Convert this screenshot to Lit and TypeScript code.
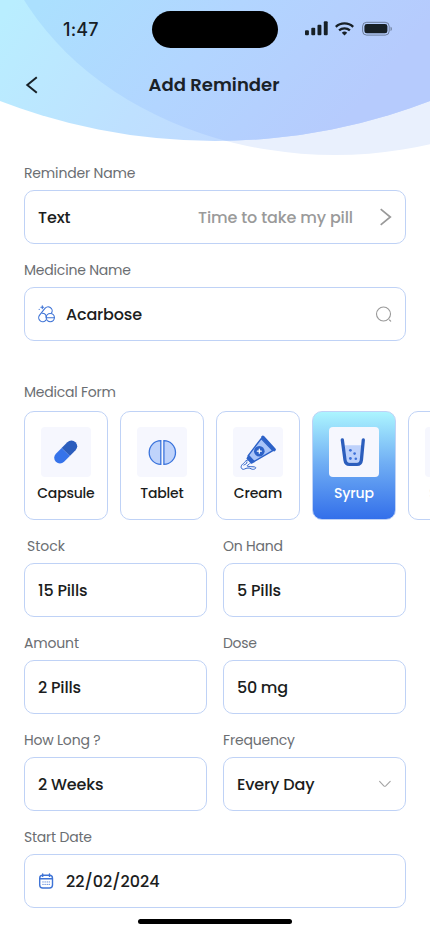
import { LitElement, html, css, svg, nothing, type TemplateResult } from "lit";
import { customElement, property } from "lit/decorators.js";
import { classMap } from "lit/directives/class-map.js";

const FONT = css`"Poppins", "Inter", "Open Sans", sans-serif`;

/** A single line of text whose tracking is tuned so it spans a set measure. */
@customElement("tracked-text")
class TrackedText extends LitElement {
  @property() text = "";
  @property({ type: Number }) measure = 0;

  static styles = css`
    :host { display: inline-block; white-space: nowrap; }
  `;

  render() {
    return html`<span>${this.text}</span>`;
  }

  updated() {
    this.fit();
    document.fonts.ready.then(() => this.fit());
  }

  private fit() {
    const span = this.renderRoot.querySelector("span");
    if (!span || !this.measure || this.text.length < 2) return;
    span.style.letterSpacing = "0px";
    const gap = (this.measure - span.getBoundingClientRect().width) / (this.text.length - 1);
    span.style.letterSpacing = `${gap.toFixed(3)}px`;
    this.style.marginRight = `${(-gap).toFixed(3)}px`;
  }
}

const t = (text: string, measure: number) =>
  html`<tracked-text .text=${text} .measure=${measure}></tracked-text>`;

const pillsIcon = html`<svg width="18" height="18" viewBox="0 0 18 18" fill="none" stroke="#3f74d6" stroke-width="1.1" stroke-linecap="round">
  <path d="M7.9 15.2A3.9 3.9 0 1 1 1.6 10.2L6.7 3.7A3.9 3.9 0 0 1 13.5 8"/>
  <path d="M4.2 8.2C7 8.3 8.3 9.8 8.1 12"/>
  <circle cx="12.3" cy="12.6" r="4.1"/><path d="M8.3 12.7h8"/>
  <path d="M4.3.8v2.8M2.9 2.2h2.8M1.2 4.4v.1"/></svg>`;
const searchIcon = html`<svg width="18" height="18" viewBox="0 0 18 18" fill="none" stroke="#999" stroke-width="1.1" stroke-linecap="round">
  <circle cx="8.5" cy="9" r="7"/><path d="m14.5 15 1.2 1.2"/></svg>`;
const chevronRight = html`<svg width="14" height="18" viewBox="0 0 14 18" fill="none" stroke="#999" stroke-width="1.7"><path d="m1.7 1.2 9.6 7.8-9.6 7.8"/></svg>`;
const chevronDown = html`<svg width="14" height="8" viewBox="0 0 14 8" fill="none" stroke="#a3a3a3" stroke-width="1.1" stroke-linecap="round" stroke-linejoin="round"><path d="m.6 1.3 4.2 4.5q1 .9 2 0l4.4-4.5"/></svg>`;
const calendarIcon = html`<svg width="16" height="16" viewBox="0 0 16 16" fill="none" stroke="#3f74d6" stroke-width="1.4" stroke-linecap="round">
  <rect x="1.7" y="2.2" width="12.8" height="12.8" rx="3"/><path d="M4.7.9v2.5M11.5.9v2.5M1.9 5.8h12.4"/>
  <path stroke-width="1.1" d="M5 8.9v.1M7.1 8.9v.1M9.2 8.9v.1M11.2 8.9v.1M5 11.4v.1M7.1 11.4v.1M9.2 11.4v.1M11.2 11.4v.1"/></svg>`;

const capsuleIcon = svg`<g transform="rotate(-45 24.7 25)">
  <path fill="#2b5dbd" d="M24.7 19.2h8.1a5.8 5.8 0 0 1 0 11.6h-8.1z"/>
  <path fill="#3673ea" d="M24.7 19.2h-8.1a5.8 5.8 0 0 0 0 11.6h8.1z"/></g>`;
const tabletIcon = svg`<g fill="#bfd3fb" stroke="#3b74dc" stroke-width="1.3">
  <path d="M23.8 13.6v23.8A11.6 11.9 0 0 1 23.8 13.6z"/><path d="M26.9 13.6v23.8A11.6 11.9 0 0 0 26.9 13.6z"/></g>`;
const creamIcon = svg`<g stroke="#2d62c8" stroke-linejoin="round" stroke-linecap="round">
  <path d="M28.2 11.6 39.8 23.6 20.8 34.6 15.2 28.6z" fill="#a9c4f8" stroke-width="1.4"/>
  <path d="M29.8 10.2 41.2 22.6" stroke-width="3.4"/>
  <path d="m15.6 28.8 5.4 5.8-2.6 1.4-4.2-4.4z" fill="#2d62c8" stroke-width="1.5"/>
  <circle cx="26.3" cy="24.2" r="5.3" fill="#2d62c8" stroke="none"/>
  <path d="M26.3 22.2v4M24.3 24.2h4" stroke="#fff" stroke-width="1.2"/>
  <path d="M14.4 33.2c-3 .8-2.4 2.3-4 3.4-2.6 1.5-2.8 4.3-1.4 5.3 1.9 1.4 3-.8 6-.9 2.7-.1 3.6 1.8 5.6 1.3 2.8-.6 2.8-2.1.8-2.4-4-.5-5 .1-7-.7-1.3-.7 1.2-1 2.4-2.6M10.8 38c1.5-1 3-.5 3.2-3" fill="#f6f7fe" stroke-width="1"/></g>`;
const syrupIcon = svg`<path d="M15.4 18.2h18l-2.2 17.3H17.8z" fill="#bdd1fb"/>
  <path d="M13.3 12.8 16 33q.5 4.3 4.4 4.3h7.6q3.9 0 4.4-4.3l1.9-20.2" fill="none" stroke="#2c5ebd" stroke-width="3.3" stroke-linecap="round"/>
  <g fill="#3d70d8"><circle cx="21.4" cy="23.3" r="1.4"/><circle cx="25.6" cy="26.6" r="1.3"/><circle cx="21.4" cy="31.5" r="1.4"/><circle cx="26.8" cy="31.8" r="1.3"/></g>`;

interface Form { name: string; measure: number; icon: unknown; selected?: boolean; faded?: boolean }
const FORMS: Form[] = [
  { name: "Capsule", measure: 57.5, icon: capsuleIcon },
  { name: "Tablet", measure: 43.5, icon: tabletIcon },
  { name: "Cream", measure: 48.5, icon: creamIcon },
  { name: "Syrup", measure: 40, icon: syrupIcon, selected: true },
  { name: "Spray", measure: 42, icon: nothing, faded: true },
];

@customElement("app-root")
class AppRoot extends LitElement {
  static styles = css`
    :host { display: block; width: 430px; height: 932px; overflow: hidden; background: #fff; color: #1b1d20; font-family: ${FONT}; position: relative; }
    * { box-sizing: border-box; }
    svg { display: block; flex: none; }
    .page { display: flex; flex-direction: column; height: 932px; }
    .header { position: relative; height: 163px; flex: none; }
    .backdrop { position: absolute; inset: 0; }
    .bar { position: relative; display: grid; grid-template-columns: 152px 126px 152px; align-items: start; padding-top: 11px; height: 60px; }
    .clock { font: 500 18px/20px Inter, sans-serif; padding: 9px 0 0 63px; color: #172026; }
    .island { height: 37px; border-radius: 19px; background: #000; }
    .status { padding: 9px 0 0 27px; }
    .nav { position: relative; display: grid; grid-template-columns: 60px 1fr 60px; align-items: center; height: 50px; }
    .back { padding-left: 25px; }
    .title { font-size: 18px; font-weight: 600; text-align: center; line-height: 24px; color: #1a2228; padding-right: 2px; }
    .form { display: flex; flex-direction: column; gap: 16px; padding: 0 24px; }
    .row { display: grid; grid-template-columns: 1fr 1fr; gap: 16px; }
    .field { display: flex; flex-direction: column; gap: 7px; }
    .label { font-size: 14px; line-height: 20px; color: #6b6e72; height: 20px; }
    .indent { padding-left: 3px; }
    .box { height: 54px; border: 1px solid #bfd2f6; border-radius: 10px; display: flex; align-items: center; padding: 1px 13px 0; font-size: 16px; font-weight: 500; }
    .lead { width: 28px; margin-top: -2px; }
    .value { flex: 1; }
    .hint { color: #9a9a9a; font-weight: 500; margin-right: 26px; }
    .trail { margin: -2px -1px 0 0; }
    .medical { display: flex; flex-direction: column; gap: 9px; margin-top: 25px; }
    .cards { display: flex; gap: 12px; margin-right: -24px; overflow: hidden; }
    .card { flex: none; width: 84px; height: 109px; border: 1px solid #bfd2f6; border-radius: 10px; display: flex; flex-direction: column; align-items: center; padding-top: 15px; font-size: 14px; font-weight: 500; line-height: 20px; gap: 6px; }
    .tile { width: 50px; height: 50px; border-radius: 4px; background: #f6f7fe; }
    .selected { background: linear-gradient(#adf6ff, #70aef4 48%, #326eea) border-box; color: #fff; }
    .faded { color: #e4e5e7; }
    .home { position: absolute; left: 138px; bottom: 8px; width: 154px; height: 5px; border-radius: 3px; background: #000; }
  `;

  private field(label: string, lm: number, value: string, vm: number, opts: { lead?: TemplateResult; trail?: TemplateResult; indent?: boolean; hint?: TemplateResult } = {}) {
    return html`<div class="field">
      <div class=${classMap({ label: true, indent: !!opts.indent })}>${t(label, lm)}</div>
      <div class="box">
        ${opts.lead ? html`<span class="lead">${opts.lead}</span>` : nothing}
        <span class="value">${t(value, vm)}</span>
        ${opts.hint ? html`<span class="hint">${opts.hint}</span>` : nothing}
        ${opts.trail ? html`<span class="trail">${opts.trail}</span>` : nothing}
      </div>
    </div>`;
  }

  render() {
    return html`<div class="page">
      <header class="header">
        <svg class="backdrop" width="430" height="163" viewBox="0 0 430 163">
          <defs>
            <linearGradient id="sky" gradientUnits="userSpaceOnUse" x1="0" y1="20" x2="270" y2="200">
              <stop offset="0" stop-color="#b9eeff"/><stop offset=".5" stop-color="#bee0ff"/><stop offset="1" stop-color="#c4d6ff"/>
            </linearGradient>
            <linearGradient id="lens" gradientUnits="userSpaceOnUse" x1="50" y1="-10" x2="290" y2="190">
              <stop offset="0" stop-color="#abe0fe"/><stop offset=".5" stop-color="#b2d5ff"/><stop offset="1" stop-color="#b6cbfd"/>
            </linearGradient>
            <clipPath id="dome"><circle cx="215" cy="-457" r="598"/></clipPath>
          </defs>
          <ellipse cx="335" cy="-125" rx="347.5" ry="280" fill="#e9f0fd"/>
          <circle cx="215" cy="-457" r="598" fill="url(#sky)"/>
          <ellipse cx="335" cy="-125" rx="347.5" ry="280" fill="url(#lens)" clip-path="url(#dome)"/>
        </svg>
        <div class="bar">
          <div class="clock">${t("1:47", 35.5)}</div>
          <div class="island"></div>
          <div class="status">
            <svg width="90" height="18" viewBox="0 0 90 18" fill="#172026">
              <rect x="0" y="10.3" width="3.9" height="5" rx="1"/><rect x="6.3" y="7.7" width="3.9" height="7.6" rx="1"/><rect x="12.5" y="4.7" width="3.9" height="10.6" rx="1"/><rect x="18.8" y="1.2" width="3.9" height="14.1" rx="1"/>
              <g fill="none" stroke="#172026" stroke-width="2.3"><path d="M30.8 6.8a12.7 12.7 0 0 1 17.4 0"/><path d="M34.1 10.4a8 8 0 0 1 10.8 0"/></g>
              <path d="M39.5 15.5l-2.7-2.7a4 4 0 0 1 5.4 0z"/>
              <rect x="57.6" y="2.3" width="26.6" height="12.8" rx="4" fill="none" stroke="#172026" stroke-opacity=".45"/>
              <rect x="59.4" y="4.1" width="23" height="9.2" rx="2.4"/><path d="M85.6 6.7v4.4c1.6-.6 1.6-3.8 0-4.4z" fill-opacity=".5"/>
            </svg>
          </div>
        </div>
        <div class="nav">
          <svg class="back" width="40" height="20" viewBox="0 0 15 20" fill="none" stroke="#172026" stroke-width="2"><path d="M11.8 2.2 2.3 10l9.5 7.8"/></svg>
          <div class="title">${t("Add Reminder", 131)}</div>
        </div>
      </header>
      <main class="form">
        ${this.field("Reminder Name", 111.5, "Text", 32.5, { hint: t("Time to take my pill", 155), trail: chevronRight })}
        ${this.field("Medicine Name", 107, "Acarbose", 76, { lead: pillsIcon, trail: searchIcon })}
        <section class="medical">
          <div class="label">${t("Medical Form", 92)}</div>
          <div class="cards">
            ${FORMS.map((f) => html`<div class=${classMap({ card: true, selected: !!f.selected, faded: !!f.faded })}>
              <svg class="tile" width="50" height="50" viewBox="0 0 50 50">${f.icon}</svg>
              ${t(f.name, f.measure)}
            </div>`)}
          </div>
        </section>
        <div class="row">
          ${this.field("Stock", 38, "15 Pills", 49.5, { indent: true })}
          ${this.field("On Hand", 60, "5 Pills", 44)}
        </div>
        <div class="row">
          ${this.field("Amount", 55, "2 Pills", 43)}
          ${this.field("Dose", 34, "50 mg", 51)}
        </div>
        <div class="row">
          ${this.field("How Long ?", 76.5, "2 Weeks", 65.5)}
          ${this.field("Frequency", 72, "Every Day", 77.5, { trail: chevronDown })}
        </div>
        ${this.field("Start Date", 68, "22/02/2024", 93.5, { lead: calendarIcon })}
      </main>
      <div class="home"></div>
    </div>`;
  }
}
